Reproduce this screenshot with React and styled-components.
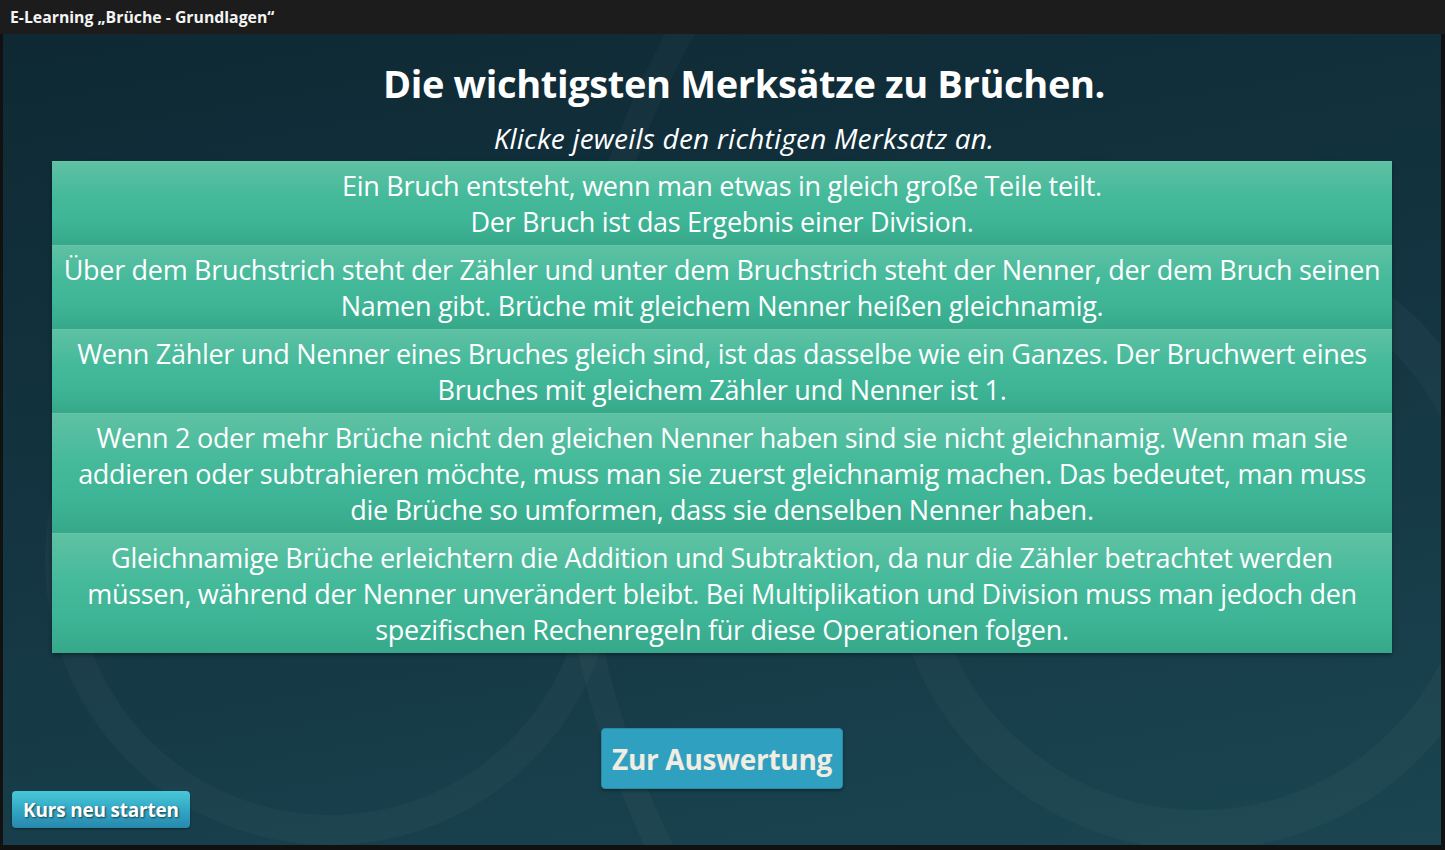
import styled, { createGlobalStyle } from "styled-components";

const GlobalStyle = createGlobalStyle`
  html, body {
    margin: 0;
    padding: 0;
    background: #111;
  }
  body {
    font-family: "Open Sans", "Noto Sans", sans-serif;
  }
`;

const Frame = styled.div`
  width: 1445px;
  height: 850px;
  display: flex;
  flex-direction: column;
  background: #111;
  overflow: hidden;
`;

const TitleBar = styled.div`
  height: 34px;
  flex: none;
  background: #1c1c1c;
  color: #f4f4f4;
  font: 700 15.8px "Open Sans", sans-serif;
  display: flex;
  align-items: center;
  padding-left: 10px;
`;

const Stage = styled.main`
  position: relative;
  flex: 1;
  margin: 0 4px 5px 3px;
  background: linear-gradient(170deg, #0e2934 0%, #133440 45%, #1a4551 100%);
  display: flex;
  flex-direction: column;
  align-items: center;
  padding: 0 0 17px;
  overflow: hidden;
`;

const Rings = styled.svg`
  position: absolute;
  inset: 0;
  pointer-events: none;
`;

const Header = styled.header`
  position: relative;
  display: flex;
  flex-direction: column;
  align-items: center;
  padding-left: 44px;
`;

const Heading = styled.h1`
  margin: 26px 0 0;
  font: 700 38px/46px "Open Sans", sans-serif;
  letter-spacing: -0.35px;
  color: #fff;
`;

const Subtitle = styled.p`
  margin: 14px 0 0;
  font: italic 400 28px/36px "Open Sans", sans-serif;
  letter-spacing: 0.2px;
  color: #fff;
`;

const List = styled.ul`
  position: relative;
  list-style: none;
  margin: 5px 0 0;
  padding: 0;
  width: 1340px;
  box-shadow: 0 2px 4px rgba(0, 0, 0, 0.35);
`;

const Item = styled.li`
  padding: 6px 8px 5px;
  text-align: center;
  color: #fff;
  font: 400 27px/36px "Open Sans", sans-serif;
  letter-spacing: -0.3px;
  background: linear-gradient(180deg, #5fc1a3 0%, #45ba9b 40%, #3eb596 70%, #37a88a 100%);
  border-top: 1px solid #66c5a8;
  cursor: pointer;
`;

const Line = styled.span`
  display: block;
  white-space: nowrap;
`;

const Spacer = styled.div`
  flex: 1;
`;

const EvalButton = styled.button`
  position: relative;
  width: 242px;
  height: 61px;
  border: 1px solid #2a8aa6;
  border-radius: 4px;
  background: #30a0c0;
  color: #f1ede2;
  font: 700 28px "Open Sans", sans-serif;
  letter-spacing: -0.3px;
  box-shadow: 0 2px 3px rgba(0, 0, 0, 0.3);
  cursor: pointer;
`;

const Footer = styled.div`
  position: relative;
  align-self: stretch;
  display: flex;
  padding: 2px 0 0 9px;
`;

const RestartButton = styled.button`
  width: 178px;
  height: 37px;
  border: none;
  border-radius: 4px;
  background: linear-gradient(180deg, #48c8d8 0%, #33a8c6 50%, #2788ac 100%);
  color: #fff;
  font: 700 19px "Open Sans", sans-serif;
  letter-spacing: -0.2px;
  text-shadow: 1px 1px 2px rgba(0, 0, 0, 0.6);
  box-shadow: 0 1px 2px rgba(0, 0, 0, 0.4);
  cursor: pointer;
`;

const rules = [
  [
    "Ein Bruch entsteht, wenn man etwas in gleich große Teile teilt.",
    "Der Bruch ist das Ergebnis einer Division.",
  ],
  [
    "Über dem Bruchstrich steht der Zähler und unter dem Bruchstrich steht der Nenner, der dem Bruch seinen",
    "Namen gibt. Brüche mit gleichem Nenner heißen gleichnamig.",
  ],
  [
    "Wenn Zähler und Nenner eines Bruches gleich sind, ist das dasselbe wie ein Ganzes. Der Bruchwert eines",
    "Bruches mit gleichem Zähler und Nenner ist 1.",
  ],
  [
    "Wenn 2 oder mehr Brüche nicht den gleichen Nenner haben sind sie nicht gleichnamig. Wenn man sie",
    "addieren oder subtrahieren möchte, muss man sie zuerst gleichnamig machen. Das bedeutet, man muss",
    "die Brüche so umformen, dass sie denselben Nenner haben.",
  ],
  [
    "Gleichnamige Brüche erleichtern die Addition und Subtraktion, da nur die Zähler betrachtet werden",
    "müssen, während der Nenner unverändert bleibt. Bei Multiplikation und Division muss man jedoch den",
    "spezifischen Rechenregeln für diese Operationen folgen.",
  ],
];

export default function App() {
  return (
    <>
      <GlobalStyle />
      <Frame>
        <TitleBar>E-Learning „Brüche - Grundlagen“</TitleBar>
        <Stage>
          <Rings viewBox="0 0 1438 811" preserveAspectRatio="none">
            <g fill="none" stroke="#ffffff" strokeOpacity="0.028">
              <circle cx="1447" cy="426" r="880" strokeWidth="26" />
              <circle cx="327" cy="526" r="270" strokeWidth="30" />
              <circle cx="1197" cy="506" r="290" strokeWidth="40" />
            </g>
          </Rings>
          <Header>
            <Heading>Die wichtigsten Merksätze zu Brüchen.</Heading>
            <Subtitle>Klicke jeweils den richtigen Merksatz an.</Subtitle>
          </Header>
          <List>
            {rules.map((lines, i) => (
              <Item key={i}>
                {lines.map((l, j) => (
                  <Line key={j}>{l}</Line>
                ))}
              </Item>
            ))}
          </List>
          <Spacer />
          <EvalButton>Zur Auswertung</EvalButton>
          <Footer>
            <RestartButton>Kurs neu starten</RestartButton>
          </Footer>
        </Stage>
      </Frame>
    </>
  );
}
